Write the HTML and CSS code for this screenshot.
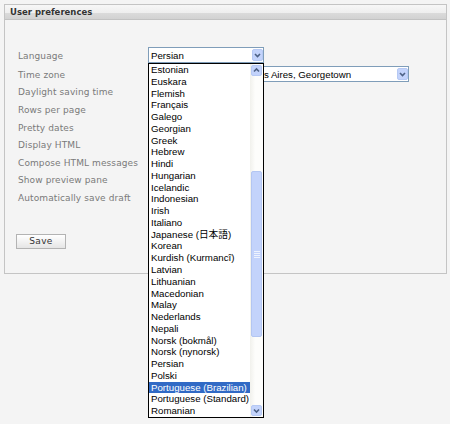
FILE: index.html
```html
<!DOCTYPE html>
<html>
<head>
<meta charset="utf-8">
<link rel="stylesheet" href="styles.css">
</head>
<body>
<div class="panel">
  <div class="panel-head">User preferences</div>
  <div class="panel-body">
    <div class="form">
      <div class="row row-sel row-first">
        <span class="label">Language</span>
        <div class="select sel-lang">
          <span class="sel-text">Persian</span>
          <span class="sel-btn"><svg width="11" height="12" viewBox="0 0 11 12"><polyline points="3,5 5.5,7.5 8,5" fill="none" stroke="#4d6185" stroke-width="1.6"/></svg></span>
          <div class="dropdown">
            <ul class="options">
              <li>Estonian</li>
              <li>Euskara</li>
              <li>Flemish</li>
              <li>Français</li>
              <li>Galego</li>
              <li>Georgian</li>
              <li>Greek</li>
              <li>Hebrew</li>
              <li>Hindi</li>
              <li>Hungarian</li>
              <li>Icelandic</li>
              <li>Indonesian</li>
              <li>Irish</li>
              <li>Italiano</li>
              <li>Japanese (日本語)</li>
              <li>Korean</li>
              <li>Kurdish (Kurmancî)</li>
              <li>Latvian</li>
              <li>Lithuanian</li>
              <li>Macedonian</li>
              <li>Malay</li>
              <li>Nederlands</li>
              <li>Nepali</li>
              <li>Norsk (bokmål)</li>
              <li>Norsk (nynorsk)</li>
              <li>Persian</li>
              <li>Polski</li>
              <li class="selected">Portuguese (Brazilian)</li>
              <li>Portuguese (Standard)</li>
              <li>Romanian</li>
            </ul>
            <div class="scrollbar">
              <span class="sb-btn"><svg width="11" height="11" viewBox="0 0 11 11"><polyline points="3,6.5 5.5,4 8,6.5" fill="none" stroke="#4d6185" stroke-width="1.6"/></svg></span>
              <div class="sb-track">
                <div class="sb-thumb"><svg width="6" height="7" viewBox="0 0 6 7"><path d="M0 0.5H6M0 2.5H6M0 4.5H6M0 6.5H6" stroke="#eef3fe" stroke-width="1"/></svg></div>
              </div>
              <span class="sb-btn"><svg width="11" height="11" viewBox="0 0 11 11"><polyline points="3,4.5 5.5,7 8,4.5" fill="none" stroke="#4d6185" stroke-width="1.6"/></svg></span>
            </div>
          </div>
        </div>
      </div>
      <div class="row row-sel row-second">
        <span class="label">Time zone</span>
        <div class="select sel-tz">
          <span class="sel-text">(GMT -3:00) Brazil, Buenos Aires, Georgetown</span>
          <span class="sel-btn"><svg width="11" height="12" viewBox="0 0 11 12"><polyline points="3,5 5.5,7.5 8,5" fill="none" stroke="#4d6185" stroke-width="1.6"/></svg></span>
        </div>
      </div>
      <div class="row row-plain"><span class="label">Daylight saving time</span></div>
      <div class="row row-plain"><span class="label">Rows per page</span></div>
      <div class="row row-plain"><span class="label">Pretty dates</span></div>
      <div class="row row-plain"><span class="label">Display HTML</span></div>
      <div class="row row-plain"><span class="label">Compose HTML messages</span></div>
      <div class="row row-plain"><span class="label">Show preview pane</span></div>
      <div class="row row-plain"><span class="label">Automatically save draft</span></div>
    </div>
    <button class="btn" type="button">Save</button>
  </div>
</div>
</body>
</html>
```

FILE: styles.css
```css
* {
  box-sizing: border-box;
}

html, body {
  margin: 0;
  padding: 0;
}

body {
  background: #f4f4f4;
  padding: 4px 0 0 4px;
  font-family: "DejaVu Sans", Verdana, sans-serif;
  height: 424px;
  overflow: hidden;
}

.panel {
  width: 443px;
  border: 1px solid #c4c4c4;
  background: #f4f4f4;
}

.panel-head {
  height: 15px;
  border-bottom: 1px solid #c2c2c2;
  background: linear-gradient(#f7f7f7 0, #eeeeee 55%, #dadada 60%, #d2d2d2 100%);
  padding-left: 5px;
  font-size: 8.5px;
  font-weight: bold;
  line-height: 14px;
  color: #333;
}

.panel-body {
  padding: 27px 0 24px 11px;
}

.form {
  margin-left: 2px;
}

.row {
  display: flex;
}

.row-sel {
  align-items: baseline;
}

.row-first {
  height: 19px;
}

.row-second {
  height: 18.4px;
}

.row-plain {
  height: 17.6px;
}

.label {
  width: 130px;
  flex: none;
  font-size: 9px;
  color: #7a7a7a;
  line-height: 17.6px;
  letter-spacing: 0.1px;
  white-space: nowrap;
}

.row-sel .label {
  line-height: 12px;
}

.select {
  position: relative;
  height: 16px;
  border: 1px solid #7f9db9;
  background: #fff;
  display: flex;
  font-family: "Liberation Sans", Arial, "Noto Sans CJK JP", sans-serif;
  font-size: 9.7px;
  color: #000;
}

.sel-lang {
  width: 116px;
}

.sel-tz {
  width: 261px;
}

.sel-text {
  flex: 1;
  padding-left: 2px;
  line-height: 15px;
  white-space: nowrap;
  overflow: hidden;
}

.sel-btn {
  flex: none;
  width: 11px;
  height: 12px;
  margin: 1px 0 1px 1px;
  background: #c3d3fb;
  border: 1px solid #b6c9f4;
  border-radius: 2px;
  display: flex;
}

.sel-btn svg {
  margin: -1px;
}

.dropdown {
  position: absolute;
  left: -1px;
  top: 15px;
  width: 116px;
  height: 355px;
  border: 1px solid #000;
  background: #fff;
  display: flex;
  z-index: 10;
}

.options {
  list-style: none;
  margin: 0;
  padding: 0;
  width: 101px;
  flex: none;
  font-size: 9.7px;
  line-height: 11.77px;
}

.options li {
  height: 11.77px;
  padding-left: 2px;
  white-space: nowrap;
  overflow: hidden;
}

.options li.selected {
  background: #316ac5;
  color: #fff;
}

.scrollbar {
  width: 13px;
  flex: none;
  display: flex;
  flex-direction: column;
  background: linear-gradient(to right, #f1f1ec, #fdfdfb 40%, #fdfdfb);
}

.sb-btn {
  width: 11px;
  height: 11px;
  margin: 1px 0 0 1px;
  background: #c3d3fb;
  border: 1px solid #b6c9f4;
  border-radius: 2px;
  display: flex;
  flex: none;
}

.sb-btn:last-child {
  margin: 0 0 1px 1px;
}

.sb-btn svg {
  margin: -1px;
}

.sb-track {
  flex: 1;
  padding-top: 95px;
}

.sb-thumb {
  width: 11px;
  height: 166px;
  margin-left: 1px;
  background: #c3d3fb;
  border: 1px solid #b3c6f2;
  border-radius: 2px;
  display: flex;
  align-items: center;
  justify-content: center;
}

.btn {
  display: block;
  width: 50px;
  height: 15px;
  margin: 26.4px 0 0 0;
  padding: 0;
  border: 1px solid #b3b3b3;
  border-radius: 0;
  background: linear-gradient(#ffffff, #e5e5e5);
  font-family: "DejaVu Sans", Verdana, sans-serif;
  font-size: 9px;
  line-height: 13px;
  letter-spacing: 0.3px;
  color: #333;
  text-align: center;
}
```
